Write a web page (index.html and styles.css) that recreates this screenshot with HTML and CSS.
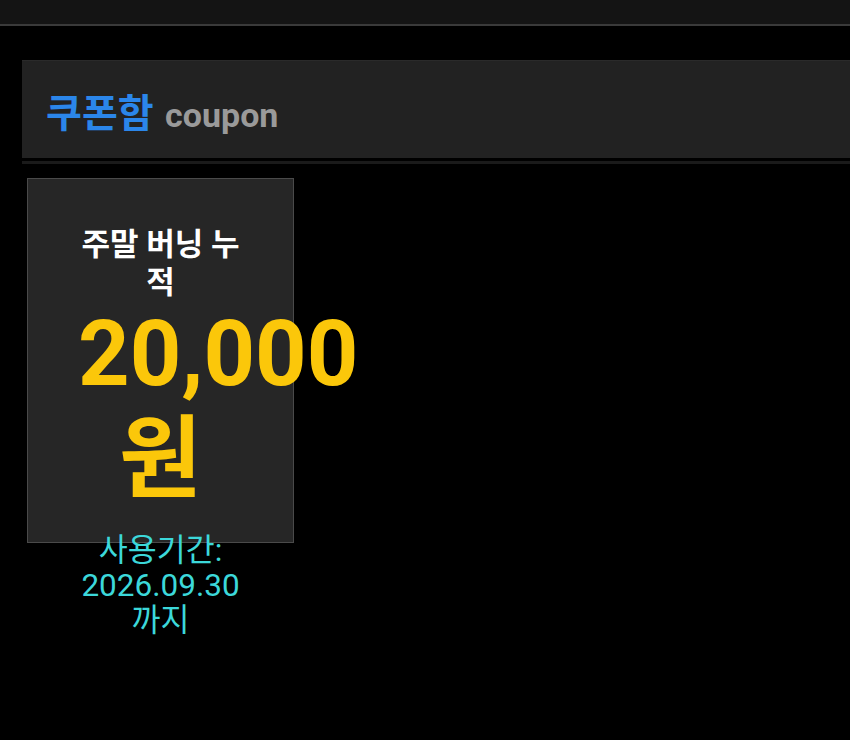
FILE: index.html
```html
<!DOCTYPE html>
<html lang="ko">
<head>
<meta charset="UTF-8" />
<meta name="viewport" content="width=device-width, initial-scale=1.0">
<title>쿠폰함</title>
<link rel="stylesheet" href="styles.css">
</head>
<body>

<div class="topbar"></div>

<div class="page">
  <header class="box-header">
    <h1><span class="title-ko">쿠폰함</span> <span class="title-en">coupon</span></h1>
  </header>

  <div class="coupon-list">
    <div class="coupon">
      <div class="coupon-card">
        <div class="coupon-name">주말 버닝 누적</div>
        <div class="coupon-amount">20,000원</div>
      </div>
      <div class="coupon-period">사용기간: 2026.09.30 까지</div>
    </div>
  </div>
</div>

</body>
</html>
```

FILE: styles.css
```css
body {
  margin: 0;
  padding: 0;
  background: #000;
  font-family: Roboto, "Noto Sans CJK KR", sans-serif;
  color: #fff;
}

.topbar {
  height: 24px;
  background: #141414;
  border-bottom: 2px solid #3a3a3a;
}

.page {
  padding: 34px 0 0 22px;
}

.box-header {
  height: 97px;
  background: #222;
  border-top: 1px solid #2a2a2a;
  box-shadow: 0 3px 0 #000, 0 6px 0 #1a1a1a;
  display: flex;
  align-items: center;
  padding-left: 24px;
}

.box-header h1 {
  margin: 0;
  font-size: 34px;
  font-weight: bold;
}

.title-ko {
  color: #2b86ea;
  font-size: 39px;
  margin-right: 3px;
}

.title-en {
  color: #9a9a9a;
}

.coupon-list {
  margin-top: 20px;
  padding-left: 5px;
}

.coupon {
  width: 267px;
  text-align: center;
}

.coupon-card {
  height: 316px;
  padding: 47px 50px 0;
  background: #262626;
  border: 1px solid #4a4a4a;
}

.coupon-name {
  font-size: 31px;
  font-weight: bold;
  line-height: 38px;
}

.coupon-amount {
  font-size: 90px;
  font-weight: bold;
  line-height: 105px;
  color: #fbc70a;
}

.coupon-period {
  width: 170px;
  margin: -10px auto 0;
  font-size: 31.5px;
  line-height: 35px;
  color: #3cd8da;
}
```
